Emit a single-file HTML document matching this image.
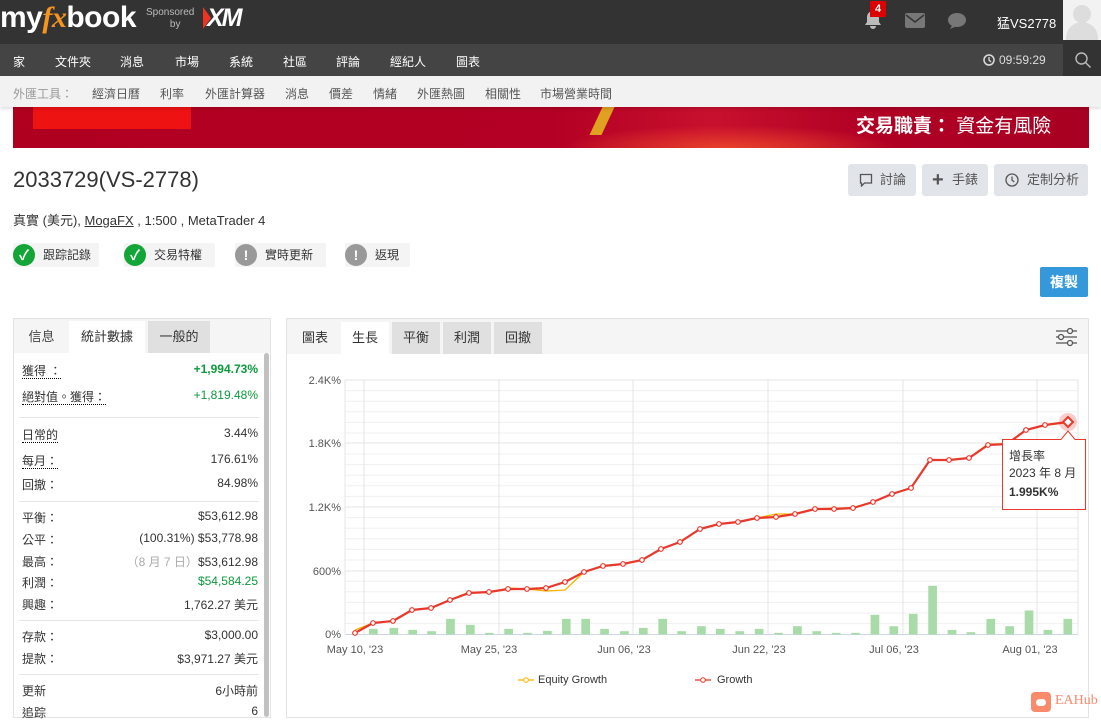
<!DOCTYPE html>
<html><head><meta charset="utf-8">
<style>
*{margin:0;padding:0;box-sizing:border-box}
body{width:1101px;height:717px;overflow:hidden;background:#fff;font-family:"Liberation Sans","Noto Sans CJK TC",sans-serif;color:#333;position:relative;font-size:13px}
.a{position:absolute;white-space:nowrap}
.nav span{position:absolute;top:53px;color:#fff;font-size:12px}
.sub span{position:absolute;top:85px;color:#555;font-size:12px}
.btn{position:absolute;top:164px;height:32px;background:#e1e5ea;border-radius:3px;color:#555;font-size:13px;line-height:32px}
.bdg{position:absolute;top:243px;height:24px;background:#f4f4f4;border-radius:2px;font-size:12px;line-height:24px;padding-left:30px;color:#333}
.bdg i{position:absolute;left:0;top:1px;width:22px;height:22px;border-radius:50%;color:#fff;font-style:normal;text-align:center;line-height:22px;font-weight:bold;font-size:14px}
.row{position:absolute;left:22px;width:236px;font-size:12px;height:18px}
.row b{font-weight:normal;position:absolute;right:0}
.dot{border-bottom:1px dotted #000}
.sep{position:absolute;left:19px;width:240px;height:1px;background:#e6e6e6}
.tab{position:absolute;font-size:13px;text-align:center;line-height:32px;height:32px}
</style></head><body>
<div class="a" style="left:0;top:0;width:1101px;height:44px;background:#333"></div>
<div class="a" style="left:0;top:1px;font-size:30px;font-weight:bold;color:#fff;letter-spacing:-0.5px">my<span style="color:#f7941d;font-style:italic;font-family:'Liberation Serif',serif">fx</span>book</div>
<div class="a" style="left:146px;top:7px;font-size:10px;color:#bbb;line-height:12px;text-align:right">Sponsored<br>by&nbsp;&nbsp;&nbsp;&nbsp;&nbsp;</div>
<div class="a" style="left:203px;top:7px;width:8px;height:22px;background:#e32;clip-path:polygon(0 0,100% 50%,0 100%)"></div>
<div class="a" style="left:207px;top:4px;font-size:25px;font-weight:bold;font-style:italic;color:#fff;letter-spacing:-2px">XM</div>
<svg class="a" style="left:864px;top:10px" width="18" height="20" viewBox="0 0 18 20"><path d="M9 1a6 6 0 0 0-6 6v5l-2 3h16l-2-3V7a6 6 0 0 0-6-6zM6 16a3 3 0 0 0 6 0z" fill="#bbb"/></svg>
<div class="a" style="left:870px;top:1px;width:16px;height:16px;background:#d00;color:#fff;font-size:11px;font-weight:bold;text-align:center;line-height:16px">4</div>
<svg class="a" style="left:905px;top:13px" width="20" height="15"><rect width="20" height="15" rx="2" fill="#777"/><path d="M1 2l9 7 9-7" stroke="#333" stroke-width="1.5" fill="none"/></svg>
<svg class="a" style="left:947px;top:12px" width="20" height="17"><ellipse cx="10" cy="8" rx="9" ry="7" fill="#777"/><path d="M3 17l3-5 4 2z" fill="#777"/></svg>
<div class="a" style="left:997px;top:13px;color:#fff;font-size:13px">猛VS2778</div>
<div class="a" style="left:1063px;top:0;width:38px;height:40px;background:#f2f2f2"></div>
<div class="a" style="left:1073px;top:5px;width:18px;height:18px;border-radius:50%;background:#ddd"></div>
<div class="a" style="left:1066px;top:22px;width:32px;height:18px;border-radius:16px 16px 0 0;background:#ddd"></div>
<div class="a" style="left:0;top:44px;width:1101px;height:32px;background:#444"></div>
<div class="nav"><span style="left:13px">家</span><span style="left:55px">文件夾</span><span style="left:120px">消息</span><span style="left:175px">市場</span><span style="left:229px">系統</span><span style="left:283px">社區</span><span style="left:336px">評論</span><span style="left:390px">經紀人</span><span style="left:456px">圖表</span></div>
<svg class="a" style="left:983px;top:54px" width="12" height="12"><circle cx="6" cy="6" r="5" stroke="#ddd" stroke-width="1.5" fill="none"/><path d="M6 3v3l2 2" stroke="#ddd" stroke-width="1.3" fill="none"/></svg>
<div class="a" style="left:999px;top:53px;color:#ddd;font-size:12px">09:59:29</div>
<div class="a" style="left:1063px;top:44px;width:38px;height:32px;background:#333"></div>
<svg class="a" style="left:1075px;top:52px" width="16" height="16"><circle cx="6.5" cy="6.5" r="5.5" stroke="#bbb" stroke-width="1.4" fill="none"/><path d="M10.5 10.5l5 5" stroke="#bbb" stroke-width="1.4"/></svg>
<div class="a" style="left:0;top:76px;width:1101px;height:31px;background:#f2f2f2;box-shadow:0 2px 3px rgba(0,0,0,.12)"></div>
<div class="sub"><span style="left:13px;color:#999">外匯工具：</span><span style="left:92px">經濟日曆</span><span style="left:160px">利率</span><span style="left:205px">外匯計算器</span><span style="left:285px">消息</span><span style="left:329px">價差</span><span style="left:373px">情緒</span><span style="left:417px">外匯熱圖</span><span style="left:485px">相關性</span><span style="left:540px">市場營業時間</span></div>
<div class="a" style="left:13px;top:107px;width:1076px;height:41px;background:linear-gradient(90deg,#b00020 0%,#b30024 50%,#c8102e 65%,#b00024 80%,#a80022 100%);z-index:-1"></div>
<div class="a" style="left:560px;top:125px;width:340px;height:23px;background:radial-gradient(ellipse at 50% 100%,#e8402a,rgba(200,20,40,0) 70%);z-index:-1"></div>
<div class="a" style="left:33px;top:107px;width:158px;height:22px;background:#ee1313;z-index:-1"></div>
<div class="a" style="left:596px;top:107px;width:12px;height:28px;background:#e0a020;transform:skewX(-25deg);z-index:-1"></div>
<div class="a" style="left:856px;top:111px;color:#fff;font-size:19px;font-weight:bold">交易職責： <span style="font-weight:normal">資金有風險</span></div>
<div class="a" style="left:1098px;top:0;width:3px;height:717px;background:#222;z-index:-2"></div>
<div class="a" style="left:1089px;top:107px;width:12px;height:610px;background:#fff;z-index:-1"></div>
<div class="a" style="left:13px;top:167px;font-size:22px;color:#333">2033729(VS-2778)</div>
<div class="a" style="left:13px;top:210px;font-size:13px;color:#333">真實 (美元), <span style="text-decoration:underline">MogaFX</span> , 1:500 , MetaTrader 4</div>
<div class="btn" style="left:848px;width:68px;padding-left:32px"><svg class="a" style="left:11px;top:9px" width="14" height="14"><path d="M1.5 1.5h11v8.5h-7l-3 3v-3h-1z" stroke="#555" stroke-width="1.3" fill="none"/></svg>討論</div>
<div class="btn" style="left:922px;width:66px;padding-left:30px"><span class="a" style="left:10px;top:0;font-size:20px;font-weight:bold">+</span>手錶</div>
<div class="btn" style="left:994px;width:94px;padding-left:33px"><svg class="a" style="left:11px;top:9px" width="14" height="14"><circle cx="7" cy="7" r="6" stroke="#555" stroke-width="1.3" fill="none"/><path d="M7 3.5v3.5l2.2 2" stroke="#555" stroke-width="1.3" fill="none"/></svg>定制分析</div>
<div class="bdg" style="left:13px;width:86px"><i style="background:#13a538">✓</i>跟踪記錄</div>
<div class="bdg" style="left:124px;width:91px"><i style="background:#13a538">✓</i>交易特權</div>
<div class="bdg" style="left:235px;width:91px"><i style="background:#999">!</i>實時更新</div>
<div class="bdg" style="left:345px;width:65px"><i style="background:#999">!</i>返現</div>
<div class="a" style="left:1040px;top:267px;width:48px;height:30px;background:#3498db;border-radius:2px;color:#fff;font-size:14px;font-weight:bold;text-align:center;line-height:30px">複製</div>
<div class="a" style="left:13px;top:318px;width:258px;height:400px;border:1px solid #e3e3e3"></div>
<div class="a" style="left:14px;top:319px;width:256px;height:34px;background:#f5f5f5"></div>
<div class="tab" style="left:14px;top:321px;width:55px;color:#444">信息</div>
<div class="tab" style="left:69px;top:321px;width:76px;background:#fff;height:33px">統計數據</div>
<div class="tab" style="left:148px;top:321px;width:62px;background:#e0e0e0">一般的</div>
<div class="a" style="left:264px;top:353px;width:5px;height:364px;background:#c1c1c1;border-radius:3px"></div>
<div class="row" style="top:362px"><span class="dot">獲得 ：</span><b style="color:#0a9a3a;font-weight:bold">+1,994.73%</b></div>
<div class="row" style="top:388px"><span class="dot">絕對值。獲得：</span><b style="color:#0a9a3a">+1,819.48%</b></div>
<div class="sep" style="top:417px"></div>
<div class="row" style="top:426px"><span class="dot">日常的</span><b>3.44%</b></div>
<div class="row" style="top:452px"><span class="dot">每月：</span><b>176.61%</b></div>
<div class="row" style="top:476px"><span>回撤：</span><b>84.98%</b></div>
<div class="sep" style="top:501px"></div>
<div class="row" style="top:509px"><span>平衡：</span><b>$53,612.98</b></div>
<div class="row" style="top:531px"><span>公平：</span><b>(100.31%) $53,778.98</b></div>
<div class="row" style="top:553px"><span>最高：</span><b><span style="color:#aaa">（8 月 7 日）</span>$53,612.98</b></div>
<div class="row" style="top:574px"><span>利潤：</span><b style="color:#0a9a3a">$54,584.25</b></div>
<div class="row" style="top:596px"><span>興趣：</span><b>1,762.27 美元</b></div>
<div class="sep" style="top:620px"></div>
<div class="row" style="top:628px"><span>存款：</span><b>$3,000.00</b></div>
<div class="row" style="top:650px"><span>提款：</span><b>$3,971.27 美元</b></div>
<div class="sep" style="top:674px"></div>
<div class="row" style="top:682px"><span>更新</span><b>6小時前</b></div>
<div class="row" style="top:704px"><span>追踪</span><b>6</b></div>
<div class="a" style="left:286px;top:318px;width:803px;height:400px;border:1px solid #e3e3e3"></div>
<div class="a" style="left:287px;top:319px;width:801px;height:35px;background:#f5f5f5"></div>
<div class="tab" style="left:290px;top:322px;width:50px;color:#333">圖表</div>
<div class="tab" style="left:341px;top:322px;width:48px;background:#fff;height:33px">生長</div>
<div class="tab" style="left:392px;top:322px;width:48px;background:#e0e0e0">平衡</div>
<div class="tab" style="left:443px;top:322px;width:48px;background:#e0e0e0">利潤</div>
<div class="tab" style="left:494px;top:322px;width:48px;background:#e0e0e0">回撤</div>
<svg class="a" style="left:1055px;top:327px" width="22" height="20" stroke="#555" stroke-width="1.3" fill="none"><path d="M1 4h21M1 10h21M1 16h21"/><circle cx="15" cy="4" r="2.5" fill="#f5f5f5"/><circle cx="6" cy="10" r="2.5" fill="#f5f5f5"/><circle cx="15" cy="16" r="2.5" fill="#f5f5f5"/></svg>
<svg class="a" style="left:286px;top:355px" width="802" height="362" viewBox="286 355 802 362" font-family="Liberation Sans,sans-serif">
<g stroke="#f0f0f0" stroke-width="1">
<path d="M345 390.6H1078M345 401.2H1078M345 411.8H1078M345 422.4H1078M345 433H1078M345 454H1078M345 464.6H1078M345 475.2H1078M345 485.8H1078M345 496.4H1078M345 517.6H1078M345 528.2H1078M345 538.8H1078M345 549.4H1078M345 560H1078M345 581.2H1078M345 591.8H1078M345 602.4H1078M345 613H1078M345 623.6H1078"/>
</g>
<g stroke="#e4e4e4" stroke-width="1">
<path d="M345 380H1078M345 443H1078M345 507H1078M345 571H1078"/>
<path d="M345 380V634M364 380V634M499 380V634M633 380V634M768 380V634M903 380V634M1037 380V634M1078 380V634"/>
</g>
<path d="M345 634.5H1078" stroke="#ccd6eb"/>
<g fill="#555" font-size="11" text-anchor="end">
<text x="341" y="384">2.4K%</text><text x="341" y="447">1.8K%</text><text x="341" y="511">1.2K%</text><text x="341" y="575">600%</text><text x="341" y="638">0%</text></g>
<g fill="#555" font-size="11" text-anchor="middle">
<text x="355" y="653">May 10, '23</text><text x="489" y="653">May 25, '23</text><text x="624" y="653">Jun 06, '23</text><text x="759" y="653">Jun 22, '23</text><text x="894" y="653">Jul 06, '23</text><text x="1030" y="653">Aug 01, '23</text></g>
<g transform="translate(290,360) scale(0.5102,0.334)" fill="#a8dba8">
<rect x="155" y="805" width="17" height="17"/><rect x="195" y="802" width="17" height="20"/><rect x="232" y="808" width="17" height="14"/><rect x="269" y="812" width="17" height="10"/><rect x="306" y="775" width="17" height="47"/><rect x="345" y="793" width="17" height="29"/><rect x="382" y="817" width="17" height="5"/><rect x="420" y="805" width="17" height="17"/><rect x="457" y="817" width="17" height="5"/><rect x="496" y="811" width="17" height="11"/><rect x="533" y="775" width="17" height="47"/><rect x="571" y="775" width="17" height="47"/><rect x="608" y="805" width="17" height="17"/><rect x="647" y="812" width="17" height="10"/><rect x="684" y="802" width="17" height="20"/><rect x="722" y="775" width="17" height="47"/><rect x="759" y="812" width="17" height="10"/><rect x="798" y="797" width="17" height="25"/><rect x="835" y="805" width="17" height="17"/><rect x="873" y="812" width="17" height="10"/><rect x="911" y="805" width="17" height="17"/><rect x="949" y="817" width="17" height="5"/><rect x="986" y="797" width="17" height="25"/><rect x="1024" y="812" width="17" height="10"/><rect x="1062" y="817" width="17" height="5"/><rect x="1100" y="817" width="17" height="5"/><rect x="1138" y="763" width="17" height="59"/><rect x="1175" y="797" width="17" height="25"/><rect x="1213" y="760" width="17" height="62"/><rect x="1251" y="676" width="17" height="146"/><rect x="1289" y="808" width="17" height="14"/><rect x="1326" y="815" width="17" height="7"/><rect x="1365" y="775" width="17" height="47"/><rect x="1402" y="797" width="17" height="25"/><rect x="1440" y="750" width="17" height="72"/><rect x="1477" y="808" width="17" height="14"/><rect x="1516" y="775" width="17" height="47"/>
</g>
<polyline fill="none" stroke="#f7b500" stroke-width="1.3" points="355,630 373,623 393,621 412,610 431,608 450,600 469,592 489,593 508,588 527,589 546,591 565,590 584,572 603,566 623,564 642,560 661,549 680,542 700,529 719,524 738,522 757,518 776,514 795,514 815,509 834,508 853,508 873,502 892,494 911,488 930,460 949,460 969,458 988,444 1007,444 1026,430 1045,425 1068,422"/>
<polyline fill="none" stroke="#e8372b" stroke-width="2.2" points="355,633 373,623 393,621 412,610 431,608 450,600 469,593 489,592 508,589 527,589 546,588 565,582 584,572 603,566 623,564 642,560 661,549 680,542 700,529 719,524 738,522 757,518 776,517 795,514 815,509 834,509 853,508 873,502 892,494 911,488 930,460 949,460 969,458 988,445 1007,444 1026,430 1045,425 1068,422"/>
<g fill="#fff" stroke="#e8372b" stroke-width="1.2">
<circle cx="355" cy="633" r="2.3"/><circle cx="373" cy="623" r="2.3"/><circle cx="393" cy="621" r="2.3"/><circle cx="412" cy="610" r="2.3"/><circle cx="431" cy="608" r="2.3"/><circle cx="450" cy="600" r="2.3"/><circle cx="469" cy="593" r="2.3"/><circle cx="489" cy="592" r="2.3"/><circle cx="508" cy="589" r="2.3"/><circle cx="527" cy="589" r="2.3"/><circle cx="546" cy="588" r="2.3"/><circle cx="565" cy="582" r="2.3"/><circle cx="584" cy="572" r="2.3"/><circle cx="603" cy="566" r="2.3"/><circle cx="623" cy="564" r="2.3"/><circle cx="642" cy="560" r="2.3"/><circle cx="661" cy="549" r="2.3"/><circle cx="680" cy="542" r="2.3"/><circle cx="700" cy="529" r="2.3"/><circle cx="719" cy="524" r="2.3"/><circle cx="738" cy="522" r="2.3"/><circle cx="757" cy="518" r="2.3"/><circle cx="776" cy="517" r="2.3"/><circle cx="795" cy="514" r="2.3"/><circle cx="815" cy="509" r="2.3"/><circle cx="834" cy="509" r="2.3"/><circle cx="853" cy="508" r="2.3"/><circle cx="873" cy="502" r="2.3"/><circle cx="892" cy="494" r="2.3"/><circle cx="911" cy="488" r="2.3"/><circle cx="930" cy="460" r="2.3"/><circle cx="949" cy="460" r="2.3"/><circle cx="969" cy="458" r="2.3"/><circle cx="988" cy="445" r="2.3"/><circle cx="1007" cy="444" r="2.3"/><circle cx="1026" cy="430" r="2.3"/><circle cx="1045" cy="425" r="2.3"/></g>
<circle cx="1068" cy="422" r="9" fill="#e8372b" opacity=".25"/>
<path d="M1068 417l5 5-5 5-5-5z" fill="#fff" stroke="#e8372b" stroke-width="2"/>
<path d="M1002.5 439.5H1061L1068 431L1075 439.5H1085.5V509.5H1002.5Z" fill="#fff" stroke="#e8372b" stroke-width="1"/>
<text x="1009" y="460" font-size="12" fill="#333" font-family="Liberation Sans,Noto Sans CJK TC,sans-serif">增長率</text>
<text x="1009" y="477" font-size="12" fill="#333" font-family="Liberation Sans,Noto Sans CJK TC,sans-serif">2023 年 8 月</text>
<text x="1009" y="496" font-size="12" fill="#333" font-weight="bold">1.995K%</text>
<path d="M518 680h16" stroke="#f7b500" stroke-width="1.3"/><circle cx="526" cy="680" r="2.3" fill="#fff" stroke="#f7b500"/>
<text x="538" y="683" font-size="11" fill="#333">Equity Growth</text>
<path d="M695 680h16" stroke="#e8372b" stroke-width="1.3"/><circle cx="703" cy="680" r="2.3" fill="#fff" stroke="#e8372b"/>
<text x="717" y="683" font-size="11" fill="#333">Growth</text>
</svg>
<div class="a" style="left:1031px;top:692px;width:20px;height:20px;background:#f98a6b;border-radius:4px"></div>
<div class="a" style="left:1036px;top:699px;width:10px;height:7px;background:#fff;border-radius:4px"></div>
<div class="a" style="left:1055px;top:693px;font-size:14px;color:#f98a6b;font-family:'Liberation Serif',serif">EAHub</div>
</body></html>
